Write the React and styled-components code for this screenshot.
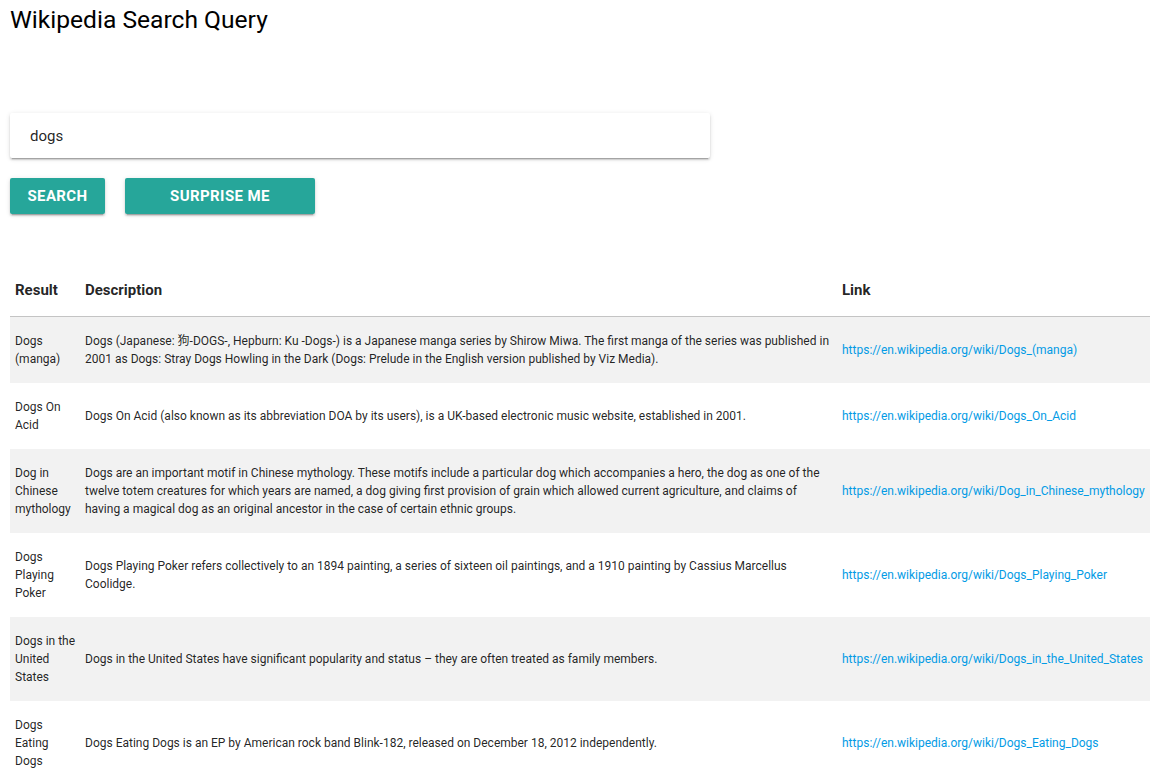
import React from "react";
import styled, { createGlobalStyle } from "styled-components";

const Global = createGlobalStyle`
  html, body { margin: 0; padding: 0; background: #fff; }
  body { font-family: Roboto, "Noto Sans CJK JP", sans-serif; color: rgba(0,0,0,0.87); }
  * { box-sizing: border-box; }
`;

const Page = styled.div`
  padding: 0 9px 0 10px;
`;

const Title = styled.h1`
  margin: 0;
  padding-top: 5px;
  font-size: 24.6px;
  font-weight: 400;
  line-height: 30px;
  color: #000;
`;

const SearchCard = styled.div`
  margin-top: 78px;
  width: 700px;
  height: 45px;
  background: #fff;
  border-radius: 2px;
  box-shadow: 0 2px 2px 0 rgba(0,0,0,0.14), 0 1px 5px 0 rgba(0,0,0,0.12), 0 3px 1px -2px rgba(0,0,0,0.2);
  display: flex;
  align-items: center;
  padding: 0 20px;
`;

const SearchInput = styled.input`
  border: none;
  outline: none;
  width: 100%;
  font-family: Roboto, sans-serif;
  font-size: 15px;
  color: rgba(0,0,0,0.87);
  background: transparent;
  padding: 0;
`;

const Buttons = styled.div`
  display: flex;
  gap: 20px;
  margin-top: 20px;
`;

const Button = styled.button`
  height: 36px;
  width: ${p => p.$w}px;
  border: none;
  border-radius: 2px;
  background: #26a69a;
  color: #fff;
  font-family: Roboto, sans-serif;
  font-size: 15px;
  font-weight: 700;
  text-transform: uppercase;
  letter-spacing: 0.4px;
  padding: 0;
  box-shadow: 0 2px 2px 0 rgba(0,0,0,0.14), 0 1px 5px 0 rgba(0,0,0,0.12), 0 3px 1px -2px rgba(0,0,0,0.2);
  cursor: pointer;
`;

const Table = styled.table`
  margin-top: 56px;
  width: 1140px;
  border-collapse: collapse;
  border-spacing: 0;
  table-layout: fixed;
`;

const Th = styled.th`
  text-align: left;
  font-size: 15px;
  font-weight: 700;
  line-height: 16px;
  padding: 12px 5px 18px;
  width: ${p => p.$w}px;
  color: rgba(0,0,0,0.87);
`;

const HeadRow = styled.tr`
  border-bottom: 1px solid rgba(0,0,0,0.12);
`;

const Row = styled.tr`
  background: ${p => (p.$odd ? "#f2f2f2" : "#fff")};
`;

const Td = styled.td`
  font-size: 12px;
  line-height: 18px;
  padding: 15px ${p => (p.$tight ? "1px" : "5px")} 15px 5px;
  vertical-align: middle;
  color: rgba(0,0,0,0.87);
`;

const Link = styled.a`
  color: #039be5;
  text-decoration: none;
`;

const data = [
  ["Dogs (manga)", "Dogs (Japanese: 狗-DOGS-, Hepburn: Ku -Dogs-) is a Japanese manga series by Shirow Miwa. The first manga of the series was published in 2001 as Dogs: Stray Dogs Howling in the Dark (Dogs: Prelude in the English version published by Viz Media).", "Dogs_(manga)"],
  ["Dogs On Acid", "Dogs On Acid (also known as its abbreviation DOA by its users), is a UK-based electronic music website, established in 2001.", "Dogs_On_Acid"],
  ["Dog in Chinese mythology", "Dogs are an important motif in Chinese mythology. These motifs include a particular dog which accompanies a hero, the dog as one of the twelve totem creatures for which years are named, a dog giving first provision of grain which allowed current agriculture, and claims of having a magical dog as an original ancestor in the case of certain ethnic groups.", "Dog_in_Chinese_mythology"],
  ["Dogs Playing Poker", "Dogs Playing Poker refers collectively to an 1894 painting, a series of sixteen oil paintings, and a 1910 painting by Cassius Marcellus Coolidge.", "Dogs_Playing_Poker"],
  ["Dogs in the United States", "Dogs in the United States have significant popularity and status – they are often treated as family members.", "Dogs_in_the_United_States"],
  ["Dogs Eating Dogs", "Dogs Eating Dogs is an EP by American rock band Blink-182, released on December 18, 2012 independently.", "Dogs_Eating_Dogs"],
];

export default function App() {
  return (
    <Page>
      <Global />
      <Title>Wikipedia Search Query</Title>
      <SearchCard>
        <SearchInput defaultValue="dogs" />
      </SearchCard>
      <Buttons>
        <Button $w={95}>Search</Button>
        <Button $w={190}>Surprise me</Button>
      </Buttons>
      <Table>
        <thead>
          <HeadRow>
            <Th $w={70}>Result</Th>
            <Th $w={757}>Description</Th>
            <Th $w={313}>Link</Th>
          </HeadRow>
        </thead>
        <tbody>
          {data.map(([t, d, l], i) => (
            <Row key={l} $odd={i % 2 === 0}>
              <Td $tight>{t}</Td>
              <Td>{d}</Td>
              <Td>
                <Link href="#">https://en.wikipedia.org/wiki/{l}</Link>
              </Td>
            </Row>
          ))}
        </tbody>
      </Table>
    </Page>
  );
}
